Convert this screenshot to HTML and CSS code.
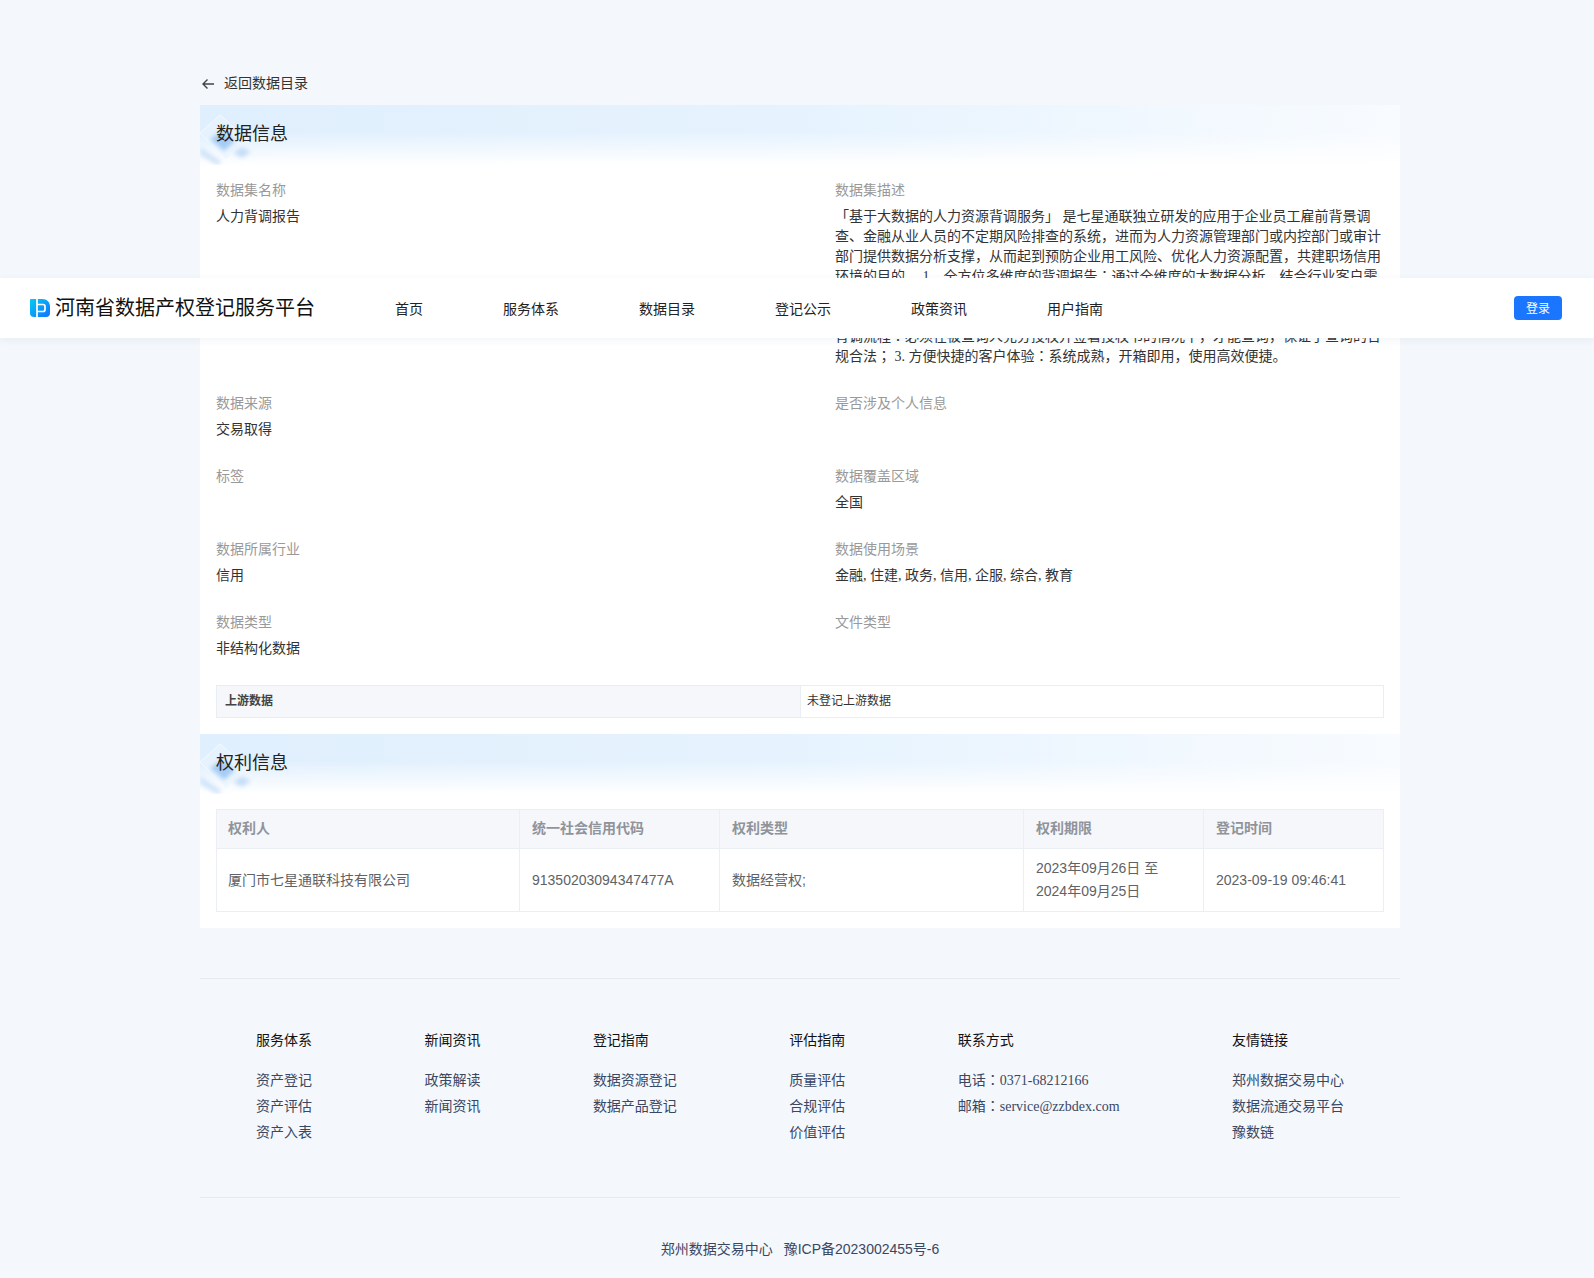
FILE: index.html
```html
<!DOCTYPE html>
<html lang="zh-CN">
<head>
  <meta charset="UTF-8" />
  <title>河南省数据产权登记服务平台</title>
  <link rel="stylesheet" href="styles.css">
</head>
<body>
  <!-- 顶部导航 -->
  <header class="topbar">
    <div class="brand">
      <svg class="brand-logo" width="20" height="18" viewBox="0 0 20 18">
        <defs>
          <linearGradient id="logoFill" x1="0" y1="0" x2="1" y2="1">
            <stop offset="0" stop-color="#00cdf2"/>
            <stop offset="1" stop-color="#1470ff"/>
          </linearGradient>
        </defs>
        <path d="M1 0H12C17 0 20 3 20 8V14C20 16.500 18.500 18 16 18H4C1.500 18 0 16.500 0 14V1C0 .4 .4 0 1 0Z" fill="url(#logoFill)"/>
        <path d="M7 0V18M7 5.500H13C14.200 5.500 15 6.300 15 7.500V10.500C15 11.700 14.200 12.500 13 12.500H7" fill="none" stroke="#fff" stroke-width="1.700"/>
      </svg>
      <span class="brand-name">河南省数据产权登记服务平台</span>
    </div>
    <nav class="nav">
      <a href="#">首页</a>
      <a href="#">服务体系</a>
      <a href="#">数据目录</a>
      <a href="#">登记公示</a>
      <a href="#">政策资讯</a>
      <a href="#">用户指南</a>
    </nav>
    <button class="login-btn">登录</button>
  </header>

  <main class="page">
    <a href="#" class="back-link">
      <svg width="14" height="14" viewBox="0 0 14 14">
        <path d="M13 7H2M6.500 2.500L2 7L6.500 11.500" fill="none" stroke="#444" stroke-width="1.400"/>
      </svg>
      <span>返回数据目录</span>
    </a>

    <div class="card">
      <!-- 数据信息 -->
      <div class="section-head">
        <svg class="head-deco" width="70" height="60" viewBox="0 0 70 60">
          <defs>
            <filter id="soft1" x="-30%" y="-30%" width="160%" height="160%"><feGaussianBlur stdDeviation="2.200"/></filter>
          </defs>
          <path d="M0 28L20 10L47 34L26 54Z" fill="#eaf4fe" opacity=".6"/>
          <path d="M0 28L20 10L47 34L26 54Z" fill="none" stroke="#f4f9ff"/>
          <path d="M10 34L22 26L35 36L24 46Z" fill="#a4ccf5" filter="url(#soft1)"/>
          <path d="M33 48L42 42L51 47L42 53Z" fill="#c6def8" filter="url(#soft1)"/>
          <path d="M0 42L22 57L17 60L0 50Z" fill="#d0e4f9" filter="url(#soft1)"/>
        </svg>
        <h2>数据信息</h2>
      </div>
      <div class="section-body">
        <div class="fields">
          <div class="field">
            <div class="field-label">数据集名称</div>
            <div class="field-value">人力背调报告</div>
          </div>
          <div class="field">
            <div class="field-label">数据集描述</div>
            <div class="field-value">「基于大数据的人力资源背调服务」 是七星通联独立研发的应用于企业员工雇前背景调查、金融从业人员的不定期风险排查的系统，进而为人力资源管理部门或内控部门或审计部门提供数据分析支撑，从而起到预防企业用工风险、优化人力资源配置，共建职场信用环境的目的。 1.&nbsp;&nbsp; 全方位多维度的背调报告<span class="mid-punct" lang="zh-TW">：</span>通过全维度的大数据分析，结合行业客户需<br><br><br>背调流程<span class="mid-punct" lang="zh-TW">：</span>必须在被查询人充分授权并签署授权书的情况下，才能查询，保证了查询的合规合法<span class="mid-punct" lang="zh-TW">；</span> 3. 方便快捷的客户体验<span class="mid-punct" lang="zh-TW">：</span>系统成熟，开箱即用，使用高效便捷。</div>
          </div>
          <div class="field">
            <div class="field-label">数据来源</div>
            <div class="field-value">交易取得</div>
          </div>
          <div class="field">
            <div class="field-label">是否涉及个人信息</div>
            <div class="field-value"></div>
          </div>
          <div class="field">
            <div class="field-label">标签</div>
            <div class="field-value"></div>
          </div>
          <div class="field">
            <div class="field-label">数据覆盖区域</div>
            <div class="field-value">全国</div>
          </div>
          <div class="field">
            <div class="field-label">数据所属行业</div>
            <div class="field-value">信用</div>
          </div>
          <div class="field">
            <div class="field-label">数据使用场景</div>
            <div class="field-value">金融, 住建, 政务, 信用, 企服, 综合, 教育</div>
          </div>
          <div class="field">
            <div class="field-label">数据类型</div>
            <div class="field-value">非结构化数据</div>
          </div>
          <div class="field">
            <div class="field-label">文件类型</div>
            <div class="field-value"></div>
          </div>
        </div>

        <div class="upstream">
          <div class="upstream-label">上游数据</div>
          <div class="upstream-value">未登记上游数据</div>
        </div>
      </div>

      <!-- 权利信息 -->
      <div class="section-head">
        <svg class="head-deco" width="70" height="60" viewBox="0 0 70 60">
          <path d="M0 28L20 10L47 34L26 54Z" fill="#eaf4fe" opacity=".6"/>
          <path d="M0 28L20 10L47 34L26 54Z" fill="none" stroke="#f4f9ff"/>
          <path d="M10 34L22 26L35 36L24 46Z" fill="#a4ccf5" filter="url(#soft1)"/>
          <path d="M33 48L42 42L51 47L42 53Z" fill="#c6def8" filter="url(#soft1)"/>
          <path d="M0 42L22 57L17 60L0 50Z" fill="#d0e4f9" filter="url(#soft1)"/>
        </svg>
        <h2>权利信息</h2>
      </div>
      <div class="section-body rights-body">
        <table class="rights">
          <colgroup>
            <col class="col-owner">
            <col class="col-code">
            <col class="col-type">
            <col class="col-term">
            <col class="col-time">
          </colgroup>
          <thead>
            <tr>
              <th>权利人</th>
              <th>统一社会信用代码</th>
              <th>权利类型</th>
              <th>权利期限</th>
              <th>登记时间</th>
            </tr>
          </thead>
          <tbody>
            <tr>
              <td>厦门市七星通联科技有限公司</td>
              <td>91350203094347477A</td>
              <td>数据经营权;</td>
              <td>2023年09月26日 至<br>2024年09月25日</td>
              <td>2023-09-19 09:46:41</td>
            </tr>
          </tbody>
        </table>
      </div>
    </div>

    <footer class="footer">
      <div class="footer-cols">
        <div class="footer-col">
          <h4>服务体系</h4>
          <a href="#">资产登记</a>
          <a href="#">资产评估</a>
          <a href="#">资产入表</a>
        </div>
        <div class="footer-col">
          <h4>新闻资讯</h4>
          <a href="#">政策解读</a>
          <a href="#">新闻资讯</a>
        </div>
        <div class="footer-col">
          <h4>登记指南</h4>
          <a href="#">数据资源登记</a>
          <a href="#">数据产品登记</a>
        </div>
        <div class="footer-col">
          <h4>评估指南</h4>
          <a href="#">质量评估</a>
          <a href="#">合规评估</a>
          <a href="#">价值评估</a>
        </div>
        <div class="footer-col">
          <h4>联系方式</h4>
          <a href="#">电话<span class="mid-punct" lang="zh-TW">：</span>0371-68212166</a>
          <a href="#">邮箱<span class="mid-punct" lang="zh-TW">：</span>service@zzbdex.com</a>
        </div>
        <div class="footer-col">
          <h4>友情链接</h4>
          <a href="#">郑州数据交易中心</a>
          <a href="#">数据流通交易平台</a>
          <a href="#">豫数链</a>
        </div>
      </div>
      <div class="footer-bottom">
        <span>郑州数据交易中心</span>
        <span>豫ICP备2023002455号-6</span>
      </div>
    </footer>
  </main>
</body>
</html>
```

FILE: styles.css
```css
html, body {
  margin: 0;
  padding: 0;
}

body {
  position: relative;
  min-height: 1278px;
  background: #f4f7fc;
  color: #333;
  font-family: "Liberation Serif", "Noto Sans CJK SC", serif;
  font-size: 14px;
  line-height: 20px;
}

a {
  color: inherit;
  text-decoration: none;
}

/* 冒号、分号居中的字形 */
.mid-punct {
  font-family: "Noto Sans CJK TC", sans-serif;
  line-height: 0;
}

/* 顶部导航 */
.topbar {
  position: absolute;
  top: 278px;
  left: 0;
  right: 0;
  z-index: 10;
  height: 60px;
  box-sizing: border-box;
  padding: 0 32px 0 30px;
  display: flex;
  align-items: center;
  background: #fff;
  box-shadow: 0 2px 8px rgba(30, 60, 120, 0.06);
}

.brand {
  display: flex;
  align-items: center;
  gap: 5px;
}

.brand-logo {
  display: block;
}

.brand-name {
  font-size: 20px;
  line-height: 28px;
  color: #111;
}

.nav {
  display: flex;
  gap: 80px;
  margin-left: 80px;
  padding-top: 3px;
  color: #222;
}

.login-btn {
  margin-left: auto;
  width: 48px;
  height: 24px;
  padding: 0;
  border: 0;
  border-radius: 4px;
  background: #1a76ff;
  color: #fff;
  font-family: inherit;
  font-size: 12px;
}

/* 内容 */
.page {
  width: 1200px;
  margin-left: 200px;
  padding-top: 74px;
}

.back-link {
  display: flex;
  align-items: center;
  gap: 9px;
  height: 20px;
  margin-bottom: 11px;
  padding-left: 1px;
  color: #333;
}

.card {
  background: #fff;
}

.section-head {
  position: relative;
  height: 60px;
  box-sizing: border-box;
  padding: 17px 16px 0;
  background:
    linear-gradient(to bottom, rgba(255, 255, 255, 0) 45%, #fff 100%),
    linear-gradient(to right, #e0effd, #e6f3fe 50%, #f8fbff 100%);
}

.section-head h2 {
  position: relative;
  margin: 0;
  font-size: 18px;
  font-weight: normal;
  line-height: 24px;
  color: #222;
}

.head-deco {
  position: absolute;
  left: 0;
  top: 0;
}

.section-body {
  padding: 16px 16px 16px;
}

.rights-body {
  padding-top: 15px;
}

.fields {
  display: grid;
  grid-template-columns: 619px 1fr;
  row-gap: 27px;
}

.field-label {
  color: #999;
  margin-bottom: 6px;
}

.field-value {
  min-height: 20px;
  color: #333;
}

.upstream {
  display: flex;
  height: 33px;
  box-sizing: border-box;
  margin-top: 26px;
  border: 1px solid #e9edf4;
  font-size: 12px;
  line-height: 31px;
}

.upstream-label {
  width: 584px;
  box-sizing: border-box;
  padding-left: 8px;
  background: #f5f7fb;
  border-right: 1px solid #e9edf4;
  color: #444;
  font-weight: bold;
}

.upstream-value {
  padding-left: 6px;
  color: #333;
}

/* 权利信息表格 */
.rights {
  width: 1167px;
  table-layout: fixed;
  border-collapse: collapse;
  font-family: "Liberation Sans", "Noto Sans CJK SC", sans-serif;
  line-height: 23px;
}

.col-owner { width: 303px; }
.col-code { width: 200px; }
.col-type { width: 304px; }
.col-term { width: 180px; }
.col-time { width: 180px; }

.rights th,
.rights td {
  padding: 8px 12px;
  border: 1px solid #ebeef5;
  text-align: left;
}

.rights th {
  padding: 7px 12px 8px;
  background: #f5f7fb;
  color: #909399;
  font-weight: bold;
}

.rights th:first-child,
.rights td:first-child {
  padding-left: 11px;
}

.rights td {
  color: #606266;
}

/* 页脚 */
.footer {
  margin-top: 50px;
  border-top: 1px solid #e6eaf1;
}

.footer-cols {
  display: flex;
  justify-content: space-between;
  padding: 51px 56px 51px;
  border-bottom: 1px solid #e6eaf1;
}

.footer-col {
  display: flex;
  flex-direction: column;
  line-height: 26px;
  color: #3a4763;
}

.footer-col h4 {
  margin: 0 0 17px;
  font-size: 14px;
  font-weight: normal;
  line-height: 21px;
  color: #111;
}

.footer-bottom {
  display: flex;
  justify-content: center;
  gap: 11px;
  padding-top: 41px;
  font-family: "Liberation Sans", "Noto Sans CJK SC", sans-serif;
  color: #3a4763;
}
```
